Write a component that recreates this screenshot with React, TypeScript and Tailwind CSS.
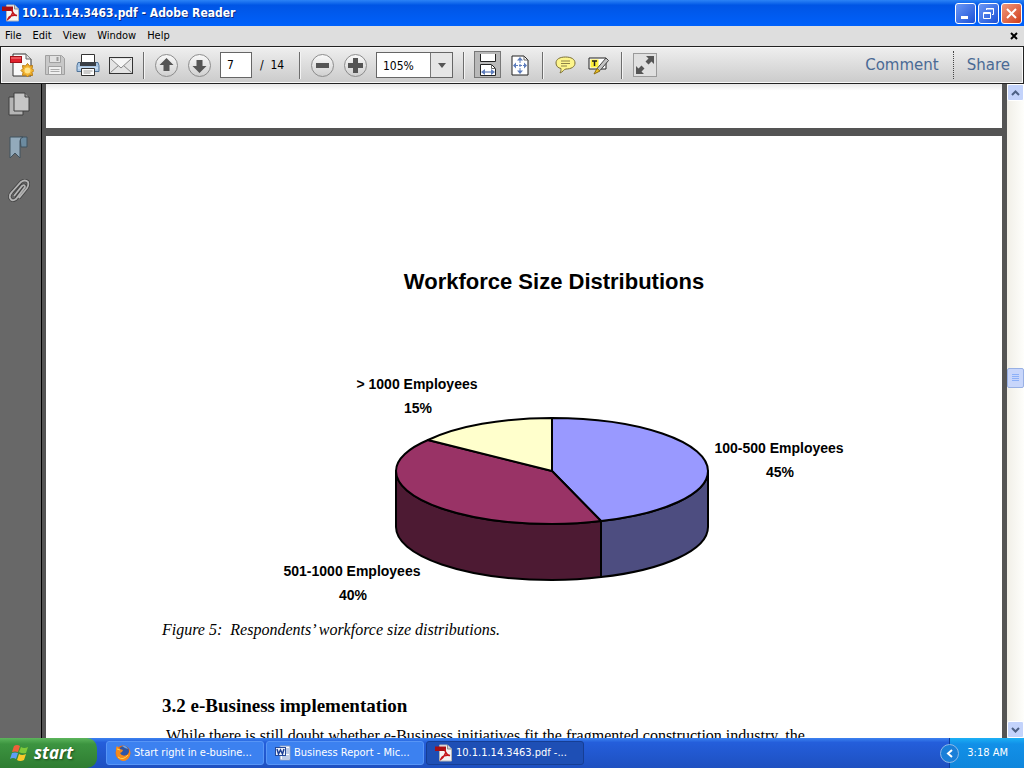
import type { ReactNode } from 'react'

const MENU = ['File', 'Edit', 'View', 'Window', 'Help']

const ZOOM_LEVELS = ['50%', '75%', '100%', '105%', '125%', '150%']

function PdfIcon() {
  return (
    <svg width="18" height="18" viewBox="0 0 18 18" className="shrink-0">
      <path d="M4.500 1h8l4 4v12h-12z" fill="#f4f4f4" stroke="#b5b5b5" />
      <path d="M12.500 1v4h4" fill="#d5d5d5" stroke="#8d8d8d" />
      <path d="M0 2.500h11v4.500H0z" fill="#a60f14" />
      <path d="M10 5c1.500 4-1 8-4 10 1-3 5-4.500 9-3.500-3 0-5-3-5-6.500z" fill="none" stroke="#c4161c" strokeWidth="1.600" />
    </svg>
  )
}

function CreatePdfIcon() {
  return (
    <svg width="24" height="24" viewBox="0 0 24 24">
      <path d="M3 1h13l5 5v17H3z" fill="#fafafa" stroke="#333" />
      <path d="M16 1v5h5" fill="#ddd" stroke="#666" />
      <rect x="0.500" y="3.500" width="11" height="6" fill="#e0202c" stroke="#a31219" />
      <path d="M1 5h10" stroke="#f58a8a" />
      <path d="M17.500 10.500l2 2.500 3-.5-.5 3 2 2-2 2 .5 3-3-.5-2 2-2-2-3 .5.5-3-2-2 2-2-.5-3 3 .5z" fill="#f3b430" stroke="#b77a12" />
      <circle cx="17.500" cy="17.500" r="3" fill="#ffe48b" />
    </svg>
  )
}

function SaveIcon() {
  return (
    <svg width="22" height="22" viewBox="0 0 22 22">
      <path d="M1.500 1.500h16l3 3v16h-19z" fill="#c8c8c8" stroke="#a0a0a0" />
      <path d="M5.500 1.500h11v7h-11z" fill="#e2e2e2" stroke="#a0a0a0" />
      <path d="M13.500 3v4" stroke="#999" strokeWidth="2" />
      <path d="M4.500 12.500h13v8h-13z" fill="#efefef" stroke="#a0a0a0" />
      <path d="M6.500 15.500h9M6.500 17.500h9" stroke="#aaa" />
    </svg>
  )
}

function PrintIcon() {
  return (
    <svg width="24" height="24" viewBox="0 0 24 24">
      <path d="M5.500 10V1.500h13V10" fill="#fff" stroke="#333" />
      <path d="M2 9.500h20l1 3v6H1v-6z" fill="#a9c6e4" stroke="#4f7398" />
      <path d="M4 9h16v4H4z" fill="#3a3f46" />
      <path d="M2 15h20" stroke="#dcebf8" />
      <path d="M5.500 15.500h13v7h-13z" fill="#fff" stroke="#333" />
      <path d="M7.500 18h9M7.500 20h7" stroke="#999" />
    </svg>
  )
}

function MailIcon() {
  return (
    <svg width="24" height="17" viewBox="0 0 24 17">
      <rect x="0.500" y="0.500" width="23" height="16" fill="#e4e4e4" stroke="#333" />
      <path d="M1.500 15.500l8-7M22.500 15.500l-8-7" stroke="#888" />
      <path d="M2 2l10 9L22 2" fill="#f6f6f6" stroke="#888" />
    </svg>
  )
}

function RoundIcon({ d }: { d: string }) {
  return (
    <svg width="25" height="25" viewBox="0 0 25 25">
      <defs>
        <linearGradient id="disc" x1="0" y1="0" x2="0" y2="1">
          <stop offset="0" stopColor="#fafafa" />
          <stop offset="1" stopColor="#cfcfcf" />
        </linearGradient>
      </defs>
      <circle cx="12.500" cy="12.500" r="11" fill="url(#disc)" stroke="#8c8c8c" />
      <path d={d} fill="#555" />
    </svg>
  )
}

function FitWidthIcon() {
  return (
    <svg width="20" height="22" viewBox="0 0 20 22">
      <path d="M2.500 0v7.500h15V0" fill="#fff" stroke="#222" />
      <path d="M2.500 21.500v-11h11l4 4v7z" fill="#fff" stroke="#222" />
      <path d="M13.500 10.500v4h4" fill="none" stroke="#666" />
      <path d="M5 18h10" stroke="#4263a8" />
      <path d="M7 15l-4 3 4 3zM13 15l4 3-4 3z" fill="#5d7dbd" />
    </svg>
  )
}

function FitPageIcon() {
  return (
    <svg width="18" height="21" viewBox="0 0 18 21">
      <path d="M1 1h12l4 4v15H1z" fill="#fff" stroke="#222" />
      <path d="M13 1v4h4" fill="none" stroke="#666" />
      <path d="M9 5v11M4 10.500h10" stroke="#5d7dbd" strokeDasharray="3 1" />
      <path d="M9 2l3 3.500H6zM9 19l3-3.500H6zM2 10.500L5 7.500v6zM16 10.500l-3-3v6z" fill="#5d7dbd" />
    </svg>
  )
}

function CommentIcon() {
  return (
    <svg width="21" height="18" viewBox="0 0 21 18">
      <path d="M10.500 1C16 1 20 3 20 7s-4 6-9 6c-2 0-3 3-6 4 1-2 1-3 1-4.500C3 12 1 10 1 7c0-4 4-6 9.500-6z" fill="#fdf58c" stroke="#7b6f36" />
      <path d="M6 5h9M6 7.500h9M6 10h6" stroke="#8c8248" />
    </svg>
  )
}

function HighlightIcon() {
  return (
    <svg width="21" height="19" viewBox="0 0 21 19">
      <path d="M1 2h17v11H1z" fill="#fff" stroke="#222" />
      <path d="M2.500 3.500h8v8h-8z" fill="#ffef3a" />
      <path d="M4 5h5M6.500 5v5" stroke="#222" strokeWidth="1.500" />
      <path d="M18 2l2.500 2.500-8 9.500-4 2 1-4z" fill="#c4c4c4" stroke="#444" />
      <path d="M9 12.500L6 18l6-3z" fill="#f2c422" stroke="#8a6d10" />
    </svg>
  )
}

function FullScreenIcon() {
  return (
    <svg width="24" height="24" viewBox="0 0 24 24">
      <rect x="0.500" y="0.500" width="23" height="23" fill="#e0e0e0" stroke="#9a9a9a" />
      <path d="M13 3h8v8l-2.500-2.500-3 3-3-3 3-3zM11 21H3v-8l2.500 2.500 3-3 3 3-3 3z" fill="#555" />
    </svg>
  )
}

function PagesIcon() {
  return (
    <svg width="22" height="24" viewBox="0 0 22 24">
      <path d="M1 5h14v18H1z" fill="#b5b5b5" stroke="#3f3f3f" />
      <path d="M6 1h11l4 4v14H6z" fill="#c6c6c6" stroke="#3f3f3f" />
      <path d="M17 1v4h4" fill="#999" stroke="#3f3f3f" />
    </svg>
  )
}

function BookmarkIcon() {
  return (
    <svg width="19" height="23" viewBox="0 0 19 23">
      <path d="M11 1h7v10h-6z" fill="#6c8ba0" stroke="#40525f" />
      <path d="M1 1h13q-3 1-3 4v17l-5-5-5 5z" fill="#93aabb" stroke="#40525f" />
    </svg>
  )
}

function ClipIcon() {
  return (
    <svg width="22" height="25" viewBox="0 0 22 25" fill="none">
      <path d="M6 17L14 7q3-2 3 1L8 20q-4 3-6-1-1-3 2-6l9-10q4-3 7 0 1 3-1 6l-8 10" stroke="#444" strokeWidth="3.500" />
      <path d="M6 17L14 7q3-2 3 1L8 20q-4 3-6-1-1-3 2-6l9-10q4-3 7 0 1 3-1 6l-8 10" stroke="#b4b4b4" strokeWidth="1.800" />
    </svg>
  )
}

function WindowsFlag() {
  return (
    <svg width="20" height="19" viewBox="0 0 20 19">
      <path d="M4 2q3-2 6 0L8 8Q5 7 2 8z" fill="#f0603a" />
      <path d="M11 3q3 2 7 0l-2 6q-4 1-7-1z" fill="#7fc93a" />
      <path d="M2 9q3-1 6 0l-2 6q-3-2-6 0z" fill="#5d9df5" />
      <path d="M9 10q3 2 7 0l-2 6q-4 2-7 0z" fill="#fbc92b" />
    </svg>
  )
}

function FirefoxIcon() {
  return (
    <svg width="16" height="16" viewBox="0 0 16 16" className="shrink-0">
      <circle cx="8" cy="8" r="7.500" fill="#e66a14" />
      <circle cx="9" cy="6" r="5" fill="#2d55a5" />
      <path d="M7 1q4-1 6 3l-3-1z" fill="#6da8e8" />
      <path d="M1 3l1-2 3 3 3 1-1 2-2 1q2 4 7 2 3-2 2-6 2 3 1 6-2 6-7 6-7-1-7-9z" fill="#f58a1c" />
      <path d="M2 4l3 1M3 12q5 4 10-2" stroke="#ffd34d" fill="none" />
    </svg>
  )
}

function WordIcon() {
  return (
    <svg width="16" height="16" viewBox="0 0 16 16" className="shrink-0">
      <path d="M5 1h10v14H5z" fill="#fff" stroke="#8199c4" />
      <path d="M11 4h3M11 6h3M11 8h3M7 11h7M7 13h7" stroke="#7b98cc" />
      <rect x="0.500" y="2.500" width="10" height="8" fill="#f0f4fc" stroke="#254a99" />
      <path d="M2 4l1.500 5L5.500 5l2 4L9 4" fill="none" stroke="#1c3f94" strokeWidth="1.500" />
    </svg>
  )
}

function ToolButton({ label, children }: { label: string; children: ReactNode }) {
  return (
    <button aria-label={label} className="flex h-7 w-[25px] shrink-0 items-center justify-center">
      {children}
    </button>
  )
}

function Divider() {
  return <div className="mx-[10px] h-[27px] w-px shrink-0 bg-[#6d6d6d] shadow-[1px_0_#f4f4f4]" />
}

function TitleBar() {
  const box = 'flex size-[21px] items-center justify-center rounded-[3px] border border-white'
  return (
    <header className="flex h-[26px] shrink-0 items-center bg-linear-to-b from-[#2b83f6] via-[#0055e5] via-20% to-[#0061fb] px-[2px]">
      <PdfIcon />
      <h1 className="ml-[2px] flex-1 text-[12px] font-bold whitespace-pre text-white [text-shadow:1px_1px_#0a2a85]">
        10.1.1.14.3463.pdf - Adobe Reader
      </h1>
      <div className="flex gap-[2px]">
        <button aria-label="Minimize" className={`${box} bg-linear-to-br from-[#6b97f5] to-[#1c4fd6]`}>
          <svg width="13" height="13"><path d="M2 9h7v3H2z" fill="#fff" /></svg>
        </button>
        <button aria-label="Restore" className={`${box} bg-linear-to-br from-[#6b97f5] to-[#1c4fd6]`}>
          <svg width="13" height="13" fill="none" stroke="#fff">
            <path d="M4.500 3V1.500h7v6H10" />
            <path d="M1.500 5.500h7v6h-7zM1.500 6.500h7M4 2h8" />
          </svg>
        </button>
        <button aria-label="Close" className={`${box} bg-linear-to-br from-[#f0977b] to-[#cf3a12]`}>
          <svg width="13" height="13"><path d="M2 2l9 9M11 2l-9 9" stroke="#fff" strokeWidth="2" /></svg>
        </button>
      </div>
    </header>
  )
}

function Toolbar() {
  return (
    <div className="flex h-[38px] shrink-0 items-center border border-[#222] bg-linear-to-b from-[#efefef] to-[#cbcbcb] pl-2 inset-shadow-[0_0_0_1px_#f8f8f8]">
      <div className="flex gap-2">
        <ToolButton label="Create PDF"><CreatePdfIcon /></ToolButton>
        <ToolButton label="Save"><SaveIcon /></ToolButton>
        <ToolButton label="Print"><PrintIcon /></ToolButton>
        <ToolButton label="Email"><MailIcon /></ToolButton>
      </div>
      <Divider />
      <div className="flex gap-2">
        <ToolButton label="Previous page"><RoundIcon d="M12.500 5l7 7h-4v6h-6v-6h-4z" /></ToolButton>
        <ToolButton label="Next page"><RoundIcon d="M12.500 20l7-7h-4V7h-6v6h-4z" /></ToolButton>
      </div>
      <input
        aria-label="Page number"
        defaultValue="7"
        className="ml-2 h-[26px] w-8 border border-[#666] bg-white px-[6px] text-[12px]"
      />
      <span className="ml-2 w-[29px] text-[12px] whitespace-pre">/  14</span>
      <Divider />
      <div className="flex gap-2">
        <ToolButton label="Zoom out"><RoundIcon d="M6 10h13v5H6z" /></ToolButton>
        <ToolButton label="Zoom in"><RoundIcon d="M10 5h5v5h5v5h-5v5h-5v-5H5v-5h5z" /></ToolButton>
      </div>
      <div className="relative ml-2 h-[26px] w-[77px] border border-[#666] bg-white">
        <select
          aria-label="Zoom level"
          defaultValue="105%"
          className="h-full w-full appearance-none bg-transparent pl-[6px] text-[12px]"
        >
          {ZOOM_LEVELS.map((z) => (
            <option key={z}>{z}</option>
          ))}
        </select>
        <span className="pointer-events-none absolute inset-y-0 right-0 flex w-[22px] items-center justify-center border-l border-[#777] bg-[#e6e6e6]">
          <svg width="8" height="5"><path d="M0 0h8L4 5z" fill="#555" /></svg>
        </span>
      </div>
      <Divider />
      <div className="flex gap-[6px]">
        <button aria-label="Fit width" className="flex size-[27px] items-center justify-center border border-[#777] bg-[#b9b9b9]">
          <FitWidthIcon />
        </button>
        <ToolButton label="Fit page"><FitPageIcon /></ToolButton>
      </div>
      <Divider />
      <div className="flex gap-2">
        <ToolButton label="Add note"><CommentIcon /></ToolButton>
        <ToolButton label="Highlight text"><HighlightIcon /></ToolButton>
      </div>
      <Divider />
      <ToolButton label="Full screen"><FullScreenIcon /></ToolButton>
      <div className="ml-auto flex items-center font-['DejaVu_Sans',sans-serif] text-[15px] text-[#4a6a95] [text-shadow:0_1px_#fff]">
        <button className="px-[14px]">Comment</button>
        <button className="h-7 border-l border-dotted border-[#444] px-[13px]">Share</button>
      </div>
    </div>
  )
}

function PieChart() {
  return (
    <svg viewBox="0 0 784 250" className="h-[250px] w-full" role="img" aria-label="Workforce size distributions">
      <g stroke="#000" strokeWidth="2" strokeLinejoin="round">
        <path d="M234 111A156 53 0 0 0 390 164Q416 164 439 161V217Q416 220 390 220A156 53 0 0 1 234 167z" fill="#4d1a33" />
        <path d="M546 111C546 134 502 154 439 161V217C502 210 546 190 546 167z" fill="#4d4d80" />
        <path d="M390 111V58A156 53 0 0 1 546 111C546 134 502 154 439 161z" fill="#9999ff" />
        <path d="M390 111L439 161Q416 164 390 164A156 53 0 0 1 234 111C234 99 247 88 266 80z" fill="#993366" />
        <path d="M390 111L266 80C295 66 340 58 390 58z" fill="#ffffcc" />
      </g>
      <g textAnchor="middle" fill="#000" className="font-['Liberation_Sans',sans-serif] text-[14px] font-bold">
        <text x="255" y="29">&gt; 1000 Employees</text>
        <text x="256" y="53">15%</text>
        <text x="617" y="93">100-500 Employees</text>
        <text x="618" y="117">45%</text>
        <text x="190" y="216">501-1000 Employees</text>
        <text x="191" y="240">40%</text>
      </g>
    </svg>
  )
}

function Scrollbar() {
  const cap = 'flex h-[17px] w-full shrink-0 items-center justify-center rounded-[2px] border border-white bg-[#c3d3fb]'
  return (
    <div className="flex w-[17px] shrink-0 flex-col bg-linear-to-r from-[#f1efe8] to-[#fefefb]">
      <button aria-label="Scroll up" className={cap}>
        <svg width="9" height="6"><path d="M1 5l3.500-3.500L8 5" fill="none" stroke="#4d6185" strokeWidth="2" /></svg>
      </button>
      <div className="flex-[4]" />
      <div className="flex h-5 w-full items-center justify-center rounded-[2px] border border-[#98b0e4] bg-[#c8d6fb]">
        <svg width="8" height="8"><path d="M0 .5h7M0 2.500h7M0 4.500h7M0 6.500h7" stroke="#8cb0f8" /></svg>
      </div>
      <div className="flex-[5]" />
      <button aria-label="Scroll down" className={cap}>
        <svg width="9" height="6"><path d="M1 1l3.500 3.500L8 1" fill="none" stroke="#4d6185" strokeWidth="2" /></svg>
      </button>
    </div>
  )
}

function DocumentView() {
  return (
    <main className="flex min-w-0 flex-1 flex-col gap-2 overflow-hidden bg-[#545454] pr-[5px] pl-1">
      <div className="h-11 shrink-0 bg-linear-to-b from-[#e8e8e8] to-white to-15%" />
      <article className="min-h-0 flex-1 overflow-hidden bg-white pr-14 pl-[116px] font-['Liberation_Serif',serif] text-black">
        <h2 className="mt-[130px] text-center font-['Liberation_Sans',sans-serif] text-[22px] leading-8 font-bold">
          Workforce Size Distributions
        </h2>
        <figure className="mt-[62px]">
          <PieChart />
          <figcaption className="mt-2 text-[16px] leading-6 whitespace-pre italic">
            {'Figure 5:  Respondents’ workforce size distributions.'}
          </figcaption>
        </figure>
        <h3 className="mt-[52px] text-[19px] leading-6 font-bold">3.2 e-Business implementation</h3>
        <p className="mt-2 pl-1 text-[16px] leading-5 whitespace-nowrap">
          While there is still doubt whether e-Business initiatives fit the fragmented construction industry, the
        </p>
      </article>
    </main>
  )
}

function TaskButton({ icon, title, active }: { icon: ReactNode; title: string; active?: boolean }) {
  const tone = active ? 'bg-[#1e4fb5] border-[#163e94]' : 'bg-[#3c81f0] border-[#5795f6]'
  return (
    <button className={`flex h-6 w-[158px] items-center gap-[3px] rounded-[3px] border px-2 text-[11px] whitespace-nowrap text-white ${tone}`}>
      {icon}
      {title}
    </button>
  )
}

function Taskbar() {
  return (
    <footer className="flex h-[30px] shrink-0 items-center bg-linear-to-b from-[#3c82f0] via-[#245edb] via-15% to-[#1e50c0]">
      <button className="flex h-full w-[97px] items-center gap-1 rounded-r-[10px] bg-linear-to-b from-[#5cb55c] via-[#3c9440] via-20% to-[#2f7d32] pl-[10px] text-white">
        <WindowsFlag />
        <span className="font-['Open_Sans',sans-serif] text-[17px] font-bold italic [text-shadow:1px_1px_2px_#1a4a1c]">start</span>
      </button>
      <div className="ml-[9px] flex gap-[2px]">
        <TaskButton icon={<FirefoxIcon />} title="Start right in e-busine..." />
        <TaskButton icon={<WordIcon />} title="Business Report - Mic..." />
        <TaskButton icon={<PdfIcon />} title="10.1.1.14.3463.pdf -..." active />
      </div>
      <div className="relative ml-auto flex h-full w-[75px] items-center justify-end border-l border-[#0d3c9c] bg-linear-to-b from-[#1cb0f5] via-[#1290e8] via-20% to-[#0f86dc] pr-4 text-[11px] text-white">
        <button aria-label="Show hidden icons" className="absolute top-[6px] -left-[10px] flex size-[19px] items-center justify-center rounded-full border border-[#8fb9e6] bg-[#1a7fd8]">
          <svg width="7" height="9"><path d="M6 1L2 4.500 6 8" fill="none" stroke="#fff" strokeWidth="2" /></svg>
        </button>
        <time>3:18 AM</time>
      </div>
    </footer>
  )
}

export default function App() {
  return (
    <div className="flex h-screen flex-col overflow-hidden font-['DejaVu_Sans_Condensed','DejaVu_Sans',sans-serif] text-black">
      <TitleBar />
      <nav className="flex h-5 shrink-0 items-center gap-[11px] bg-[#dedede] pr-[6px] pl-[5px] text-[11px]">
        {MENU.map((m) => (
          <button key={m}>{m}</button>
        ))}
        <button aria-label="Close document" className="ml-auto">
          <svg width="8" height="8"><path d="M1 1l6 6M7 1L1 7" stroke="#000" strokeWidth="2" /></svg>
        </button>
      </nav>
      <Toolbar />
      <div className="flex min-h-0 flex-1">
        <aside className="flex w-[42px] shrink-0 flex-col items-center gap-5 border-r border-black bg-[#686868] pt-2 pr-1">
          <button aria-label="Page thumbnails"><PagesIcon /></button>
          <button aria-label="Bookmarks"><BookmarkIcon /></button>
          <button aria-label="Attachments"><ClipIcon /></button>
        </aside>
        <DocumentView />
        <Scrollbar />
      </div>
      <Taskbar />
    </div>
  )
}
